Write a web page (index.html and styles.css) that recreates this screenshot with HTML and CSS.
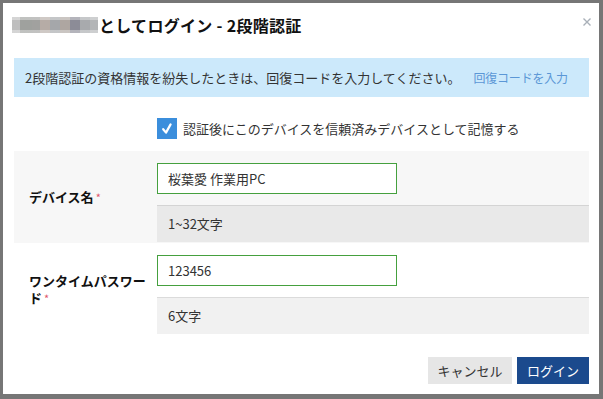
FILE: index.html
```html
<!DOCTYPE html>
<html lang="ja">
<head>
<meta charset="utf-8">
<link rel="stylesheet" href="styles.css">
</head>
<body>
<div class="dialog">
  <div class="header">
    <h1 class="title"><span class="mosaic"><span class="m m1"></span><span class="m m2"></span><span class="m m3"></span><span class="m m4"></span><span class="m m5"></span><span class="m m6"></span><span class="m m7"></span><span class="m m8"></span><span class="m m9"></span></span>としてログイン - 2段階認証</h1>
    <button class="close" aria-label="閉じる"><svg width="8" height="8" viewBox="0 0 8 8"><path d="M0.5 0.5 L7.5 7.5 M7.5 0.5 L0.5 7.5" stroke="#a9b0b8" stroke-width="1.4"/></svg></button>
  </div>
  <div class="alert"><span class="alert-text">2段階認証の資格情報を紛失したときは、回復コードを入力してください。</span><a class="alert-link" href="#">回復コードを入力</a></div>
  <label class="remember">
    <span class="checkbox"><svg width="20" height="21" viewBox="0 0 20 21"><path d="M6.2 11.2 L9 14.6 L13.6 6.4" fill="none" stroke="#fff" stroke-width="2.2" stroke-linecap="round" stroke-linejoin="round"/></svg></span>
    <span class="remember-text">認証後にこのデバイスを信頼済みデバイスとして記憶する</span>
  </label>
  <div class="field field-shaded">
    <div class="field-label"><span class="keep">デバイス名<span class="req">*</span></span></div>
    <div class="field-body">
      <div class="input">桜葉愛 作業用PC</div>
      <div class="hint">1~32文字</div>
    </div>
  </div>
  <div class="field field-plain">
    <div class="field-label">ワンタイムパスワー<span class="keep">ド<span class="req">*</span></span></div>
    <div class="field-body">
      <div class="input">123456</div>
      <div class="hint">6文字</div>
    </div>
  </div>
  <div class="footer">
    <button class="btn btn-cancel">キャンセル</button>
    <button class="btn btn-login">ログイン</button>
  </div>
</div>
</body>
</html>
```
FILE: styles.css
```css
* { box-sizing: border-box; }
html, body { margin: 0; padding: 0; }
body {
  background: #767676;
  width: 603px;
  height: 399px;
  padding: 3px 4px 0 3px;
  font-family: "Noto Sans CJK JP", "Noto Sans", sans-serif;
  color: #333;
  font-size: 13px;
  overflow: hidden;
}
.dialog {
  background: #fff;
  width: 596px;
  height: 391px;
  padding: 0 10px 0 11px;
  display: flex;
  flex-direction: column;
}
.header {
  position: relative;
  padding-top: 12px;
  height: 32px;
}
.title {
  margin: 0;
  font-size: 16px;
  line-height: 20px;
  font-weight: bold;
  color: #111;
  display: flex;
  align-items: center;
  letter-spacing: 0.3px;
}
.mosaic {
  display: flex;
  height: 16px;
  margin-left: -2px;
  margin-right: 1px;
}
.m {
  height: 16px;
  background-image: linear-gradient(rgba(255,255,255,0.35) 0, rgba(255,255,255,0.35) 3px, transparent 3px, transparent 13px, rgba(255,255,255,0.35) 13px);
}
.m1 { width: 8px; background-color: #bebebe; }
.m2 { width: 12px; background-color: #9fa19e; }
.m3 { width: 8px; background-color: #a1a19f; }
.m4 { width: 10px; background-color: #b6aca6; }
.m5 { width: 10px; background-color: #a5a7aa; }
.m6 { width: 10px; background-color: #aea6a1; }
.m7 { width: 10px; background-color: #8c8c97; }
.m8 { width: 10px; background-color: #a8aaad; }
.m9 { width: 8px; background-color: #b3b5b7; }
.close {
  position: absolute;
  right: -2px;
  top: 15px;
  border: 0;
  background: none;
  padding: 0;
  width: 8px;
  height: 8px;
  display: block;
}
.close svg { display: block; }
.alert {
  margin-top: 23px;
  height: 39px;
  background: #cce9fb;
  padding: 0 11px;
  line-height: 39px;
  font-size: 13px;
  color: #333;
  white-space: nowrap;
}
.alert-link {
  margin-left: 13px;
  color: #5b97d6;
  text-decoration: none;
  font-size: 12px;
  letter-spacing: -0.2px;
}
.remember {
  margin-top: 21px;
  height: 21px;
  padding-left: 143px;
  display: flex;
  align-items: center;
}
.checkbox {
  width: 20px;
  height: 21px;
  background: #3b8edc;
  display: block;
}
.checkbox svg { display: block; }
.remember-text {
  margin-left: 6px;
  font-size: 13px;
  color: #333;
  line-height: 21px;
}
.field {
  display: grid;
  grid-template-columns: 143px 1fr;
  height: 92px;
}
.field-shaded {
  margin-top: 12px;
  background: #f7f7f7;
}
.field-plain {
  height: 93px;
  background: #fff;
}
.field-label {
  align-self: center;
  padding: 0 8px 0 15px;
  font-weight: bold;
  color: #111;
  font-size: 13px;
  line-height: 17px;
}
.keep { white-space: nowrap; }
.req {
  color: #e0566b;
  font-size: 11px;
  margin-left: 2px;
  font-weight: normal;
}
.field-body {
  padding-top: 12px;
}
.input {
  width: 240px;
  height: 31px;
  border: 1px solid #45a03e;
  background: #fff;
  padding: 0 10px;
  line-height: 29px;
  font-size: 13px;
  color: #333;
}
.hint {
  margin-top: 11px;
  height: 37px;
  border-top: 1px solid rgba(0,0,0,0.09);
  background: rgba(0,0,0,0.055);
  padding: 0 11px;
  line-height: 36px;
  font-size: 13px;
  color: #333;
}
.footer {
  margin-top: 21px;
  display: flex;
  justify-content: flex-end;
  gap: 5px;
}
.btn {
  height: 27px;
  border: 0;
  padding: 0;
  font-family: inherit;
  font-size: 13px;
  line-height: 27px;
}
.btn-cancel {
  width: 84px;
  background: #e6e6e6;
  color: #333;
}
.btn-login {
  width: 72px;
  background: #1b4a8d;
  color: #fff;
}
```
